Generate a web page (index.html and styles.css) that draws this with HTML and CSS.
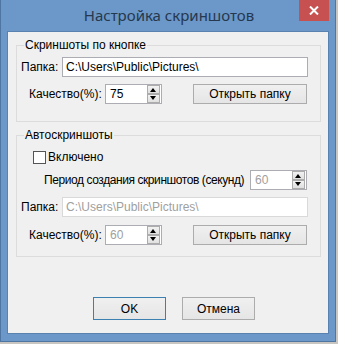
FILE: index.html
```html
<!DOCTYPE html>
<html lang="ru">
<head>
  <meta charset="UTF-8">
  <title>Настройка скриншотов</title>
  <link rel="stylesheet" href="styles.css">
</head>
<body>

  <div class="window">
    <div class="titlebar">
      <span class="title">Настройка скриншотов</span>
      <button class="close">
        <svg width="10" height="9" viewBox="0 0 10 9"><path d="M1 0.5 L9 8.5 M9 0.5 L1 8.5" stroke="#fff" stroke-width="2"/></svg>
      </button>
    </div>

    <div class="client">
      <fieldset class="group first">
        <legend>Скриншоты по кнопке</legend>
        <div class="row folder-row">
          <label>Папка:</label>
          <div class="field path">C:\Users\Public\Pictures\</div>
        </div>
        <div class="row quality-row">
          <label>Качество(%):</label>
          <div class="spin">
            <span class="value">75</span>
            <div class="arrows">
              <span class="arrow up"></span>
              <span class="arrow down"></span>
            </div>
          </div>
          <button class="btn open">Открыть папку</button>
        </div>
      </fieldset>

      <fieldset class="group second">
        <legend>Автоскриншоты</legend>
        <div class="row check-row">
          <span class="checkbox"></span>
          <label>Включено</label>
        </div>
        <div class="row period-row">
          <label>Период создания скриншотов (секунд)</label>
          <div class="spin period">
            <span class="value disabled">60</span>
            <div class="arrows">
              <span class="arrow up"></span>
              <span class="arrow down"></span>
            </div>
          </div>
        </div>
        <div class="row folder-row">
          <label>Папка:</label>
          <div class="field path disabled">C:\Users\Public\Pictures\</div>
        </div>
        <div class="row quality-row">
          <label>Качество(%):</label>
          <div class="spin">
            <span class="value disabled">60</span>
            <div class="arrows">
              <span class="arrow up"></span>
              <span class="arrow down"></span>
            </div>
          </div>
          <button class="btn open">Открыть папку</button>
        </div>
      </fieldset>

      <div class="footer">
        <button class="btn ok">OK</button>
        <button class="btn">Отмена</button>
      </div>
    </div>
  </div>

</body>
</html>
```

FILE: styles.css
```css
body {
  margin: 0;
  background: #c9c6c1;
  font-family: 'Liberation Sans', Arial, sans-serif;
  font-size: 12px;
  color: #000;
}

.window {
  width: 336px;
  height: 342px;
  background: #6b97c9;
  border-left: 1px solid #4f76a3;
  border-right: 1px solid #4f76a3;
  border-bottom: 1px solid #4f76a3;
  box-sizing: border-box;
  display: flex;
  flex-direction: column;
}

.titlebar {
  height: 31px;
  display: flex;
  align-items: flex-start;
  padding-right: 6px;
}

.title {
  flex: 1;
  text-align: center;
  padding-left: 38px;
  padding-top: 5px;
  font-family: 'Noto Sans', sans-serif;
  font-size: 15px;
  color: #26384d;
}

.close {
  width: 30px;
  height: 21px;
  border: none;
  padding: 0;
  background: #c75050;
  display: flex;
  align-items: center;
  justify-content: center;
}

.client {
  margin: 0 6px;
  height: 303px;
  background: #f0f0f0;
  border: 1px solid #5a82b0;
  box-sizing: border-box;
  padding: 0 0 0 8px;
}

.group {
  margin: 0;
  padding: 0 0 0 4px;
  border: 1px solid #dcdcdc;
  width: 305px;
  box-sizing: border-box;
}

.group legend {
  padding: 0 1px;
  margin-left: 3px;
  line-height: 16px;
}

.group.first {
  margin-top: 5px;
  height: 85px;
  padding-top: 4px;
}

.group.second {
  margin-top: 5px;
  height: 130px;
  padding-top: 3px;
}

.row {
  display: flex;
  align-items: center;
}

.row label {
  white-space: nowrap;
  flex-shrink: 0;
}

.folder-row label {
  width: 41px;
}

.quality-row {
  margin-top: 7px;
  padding-left: 8px;
}

.quality-row label {
  width: 76px;
}

.field {
  height: 20px;
  box-sizing: border-box;
  border: 1px solid #abadb3;
  background: #fff;
  line-height: 18px;
  padding-left: 3px;
}

.path {
  width: 246px;
}

.disabled {
  color: #a0a0a0;
}

.field.disabled {
  border-color: #d9d9d9;
}

.spin {
  width: 57px;
  height: 20px;
  box-sizing: border-box;
  border: 1px solid #abadb3;
  background: #fff;
  display: flex;
  align-items: center;
  justify-content: space-between;
  padding: 0 1px 0 4px;
}

.spin.period {
  margin-left: 8px;
}

.arrows {
  display: flex;
  flex-direction: column;
}

.arrow {
  width: 13px;
  height: 9px;
  box-sizing: border-box;
  border: 1px solid #acacac;
  background: linear-gradient(#f2f2f2, #e0e0e0);
  position: relative;
}

.arrow::after {
  content: '';
  position: absolute;
  left: 2px;
  top: 2px;
  border-left: 3.5px solid transparent;
  border-right: 3.5px solid transparent;
}

.arrow.up::after {
  border-bottom: 4px solid #000;
}

.arrow.down::after {
  top: 1px;
  border-top: 4px solid #000;
}

.btn {
  font-family: inherit;
  font-size: 12px;
  color: #000;
  border: 1px solid #acacac;
  background: linear-gradient(#f0f0f0, #e5e5e5);
  padding: 0;
  cursor: pointer;
}

.open {
  width: 114px;
  height: 20px;
  margin-left: 31px;
}

.check-row {
  margin-top: 4px;
  padding-left: 12px;
}

.checkbox {
  width: 13px;
  height: 13px;
  box-sizing: border-box;
  border: 1px solid #555;
  background: #fff;
  margin-right: 2px;
}

.period-row {
  margin-top: 6px;
  padding-left: 23px;
}

.period-row label {
  width: 198px;
  letter-spacing: -0.42px;
}

.second .folder-row {
  margin-top: 7px;
}

.second .quality-row {
  margin-top: 8px;
}

.footer {
  display: flex;
  gap: 16px;
  justify-content: center;
  padding-left: 4px;
  margin-top: 40px;
}

.footer .btn {
  width: 73px;
  height: 23px;
}

.footer .ok {
  border-color: #3c7fb1;
}
```
